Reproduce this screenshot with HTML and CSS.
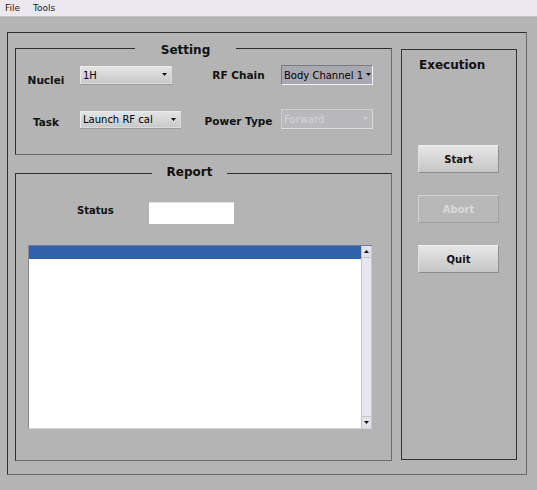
FILE: index.html
```
<!DOCTYPE html>
<html lang="en">
<head>
    <meta charset="UTF-8">
    <title>RF Calibration</title>
    <link rel="stylesheet" href="styles.css">
</head>
<body>
    <div class="menubar">
        <span>File</span>
        <span>Tools</span>
    </div>

    <div class="window">
        <div class="frame">
            <div class="left-col">
                <div class="group setting">
                    <div class="group-title title-setting">Setting</div>
                    <div class="setting-grid">
                        <div class="label lbl-nuclei">Nuclei</div>
                        <div class="combo combo-nuclei">1H
                            <svg class="arrow" width="5" height="3" viewBox="0 0 5 3"><polygon points="0,0 5,0 2.5,3"/></svg>
                        </div>
                        <div class="label lbl-chain">RF Chain</div>
                        <div class="combo combo-chain">Body Channel 1
                            <svg class="arrow" width="5" height="3" viewBox="0 0 5 3"><polygon points="0,0 5,0 2.5,3"/></svg>
                        </div>

                        <div class="label lbl-task">Task</div>
                        <div class="combo combo-task">Launch RF cal
                            <svg class="arrow" width="5" height="3" viewBox="0 0 5 3"><polygon points="0,0 5,0 2.5,3"/></svg>
                        </div>
                        <div class="label lbl-power">Power Type</div>
                        <div class="combo combo-power disabled">Forward
                            <svg class="arrow" width="5" height="3" viewBox="0 0 5 3"><polygon points="0,0 5,0 2.5,3"/></svg>
                        </div>
                    </div>
                </div>

                <div class="group report">
                    <div class="group-title title-report">Report</div>
                    <div class="status-row">
                        <div class="label status-label">Status</div>
                        <div class="status-field"></div>
                    </div>
                    <div class="listbox">
                        <div class="list-items">
                            <div class="list-row selected"></div>
                        </div>
                        <div class="scrollbar">
                            <div class="scroll-btn">
                                <svg width="5" height="3" viewBox="0 0 5 3"><polygon points="2.5,0 5,3 0,3"/></svg>
                            </div>
                            <div class="scroll-track"></div>
                            <div class="scroll-btn">
                                <svg width="5" height="3" viewBox="0 0 5 3"><polygon points="0,0 5,0 2.5,3"/></svg>
                            </div>
                        </div>
                    </div>
                </div>
            </div>

            <div class="execution">
                <div class="exec-title">Execution</div>
                <div class="buttons">
                    <div class="btn">Start</div>
                    <div class="btn disabled">Abort</div>
                    <div class="btn">Quit</div>
                </div>
            </div>
        </div>
    </div>
</body>
</html>
```

FILE: styles.css
```
* {
    margin: 0;
    padding: 0;
    box-sizing: border-box;
}

body {
    background: #b4b4b4;
    font-family: 'DejaVu Sans', sans-serif;
    color: #111;
    width: 537px;
    height: 490px;
    overflow: hidden;
}

.menubar {
    height: 17px;
    background: #ebe9ef;
    border-bottom: 1px solid #c2c2c6;
    display: flex;
    align-items: center;
    gap: 13px;
    padding-left: 5px;
    font-size: 9px;
    color: #222;
}

.window {
    padding: 15px 0 0 7px;
}

.frame {
    width: 520px;
    height: 443px;
    border: 1px solid;
    border-color: #2e2e2e #6c6c6c #6c6c6c #2e2e2e;
    padding: 15px 0 0 7px;
    display: flex;
    gap: 9px;
}

.left-col {
    width: 377px;
    display: flex;
    flex-direction: column;
    gap: 18px;
}

.group {
    position: relative;
    border: 1px solid;
    border-color: #2e2e2e #6c6c6c #6c6c6c #2e2e2e;
}

.group-title {
    position: absolute;
    top: -9px;
    height: 14px;
    line-height: 14px;
    background: #b4b4b4;
    text-align: center;
    font-size: 12px;
    font-weight: bold;
}

.title-setting {
    top: -6px;
    left: 119px;
    width: 101px;
}

.title-report {
    left: 136px;
    width: 75px;
}

.setting {
    height: 107px;
}

.setting-grid {
    display: grid;
    grid-template-columns: 64px 116px 85px 92px;
    grid-template-rows: 20px 20px;
    row-gap: 24px;
    padding-top: 16px;
    align-items: center;
}

.label {
    font-size: 10.5px;
    font-weight: bold;
    text-align: center;
}

.lbl-nuclei {
    padding-right: 4px;
    padding-top: 10px;
}

.lbl-task {
    padding-right: 4px;
    padding-top: 5px;
}

.lbl-power {
    padding-top: 3px;
}

.combo {
    position: relative;
    font-size: 10px;
    padding-left: 2px;
    display: flex;
    align-items: center;
    color: #000;
}

.combo .arrow {
    position: absolute;
    right: 4px;
    top: 50%;
    margin-top: -2px;
    fill: #111;
}

.combo-nuclei, .combo-task {
    background: linear-gradient(#e4e4e4, #c9c9c9);
    border: 1px solid;
    border-color: #ececec #dadada #dadada #ececec;
    box-shadow: 0 1px 0 #9e9e9e;
}

.combo-nuclei {
    width: 92px;
    height: 18px;
}

.combo-task {
    width: 101px;
    height: 17px;
    margin-top: 1px;
}

.combo-chain, .combo-power {
    width: 92px;
    height: 20px;
}

.combo-chain {
    background: #a8a8b0;
    border: 1px solid;
    border-color: #7c7c84 #f2f2f2 #f2f2f2 #7c7c84;
}

.combo-chain .arrow {
    right: 1px;
}

.combo-power {
    background: #b9b9bb;
    border: 1px solid;
    border-color: #cfcfcf #dcdcdc #dcdcdc #cfcfcf;
    color: #d6d6d8;
}

.combo-power .arrow {
    fill: #d0d0d4;
}

.report {
    height: 288px;
}

.status-row {
    display: flex;
    align-items: center;
    padding: 28px 0 0 61px;
}

.status-label {
    font-size: 10px;
    width: 72px;
    text-align: left;
    padding-bottom: 5px;
}

.status-field {
    width: 85px;
    height: 22px;
    background: #fff;
    border-top: 1px solid #e4e4e4;
}

.listbox {
    display: flex;
    width: 344px;
    height: 184px;
    margin: 21px 0 0 12px;
    border-top: 1px solid #6f7ea0;
    border-bottom: 1px solid #d4d4d4;
    border-left: 1px solid #8a8a8a;
    background: #fff;
}

.list-items {
    flex: 1;
}

.list-row {
    height: 13px;
}

.list-row.selected {
    background: #3061aa;
}

.scrollbar {
    width: 11px;
    display: flex;
    flex-direction: column;
    background: #e8e6ee;
    border-left: 1px solid #c4c4c8;
    border-right: 1px solid #c8c8cc;
}

.scroll-btn {
    height: 12px;
    display: flex;
    align-items: center;
    justify-content: center;
    background: #e2e0e8;
    border-bottom: 1px solid #c6c6ca;
}

.scroll-btn:last-child {
    border-bottom: none;
    border-top: 1px solid #c6c6ca;
}

.scroll-btn svg {
    fill: #111;
}

.scroll-track {
    flex: 1;
}

.execution {
    width: 116px;
    height: 411px;
    margin-top: 1px;
    border: 1px solid #333;
}

.exec-title {
    font-size: 12px;
    font-weight: bold;
    line-height: 14px;
    margin-top: 8px;
    padding-left: 17px;
}

.buttons {
    display: flex;
    flex-direction: column;
    gap: 22px;
    padding-left: 16px;
    margin-top: 73px;
}

.btn {
    width: 81px;
    height: 28px;
    display: flex;
    align-items: center;
    justify-content: center;
    font-size: 10px;
    font-weight: bold;
    background: linear-gradient(#e6e6e6, #c6c6c6);
    border: 1px solid;
    border-color: #f0f0f0 #8e8e8e #8e8e8e #e0e0e0;
}

.btn.disabled {
    background: #b8b8b8;
    border-color: #d2d2d2 #a0a0a0 #a0a0a0 #d2d2d2;
    color: #dadada;
}
```
